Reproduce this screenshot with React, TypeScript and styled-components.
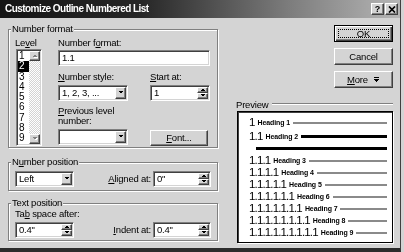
import React from "react";
import styled, { createGlobalStyle, css } from "styled-components";

const FACE = "#d4d4d4";

const Global = createGlobalStyle`
  *, *::before, *::after { box-sizing: border-box; }
  html, body { margin: 0; padding: 0; background: ${FACE}; }
  body {
    width: 404px; height: 252px; overflow: hidden;
    font-family: "Liberation Sans", Arial, sans-serif;
  }
  #root { width: 404px; height: 252px; }
`;

const raised = css`
  background: ${FACE};
  border-style: solid;
  border-width: 1px;
  border-color: #fff #404040 #404040 #fff;
  box-shadow: inset -1px -1px 0 #808080;
`;

const sunken = css`
  background: #fff;
  border-style: solid;
  border-width: 1px;
  border-color: #808080 #fff #fff #808080;
  box-shadow: inset 1px 1px 0 #404040, inset -1px -1px 0 ${FACE};
`;

const Dialog = styled.div`
  width: 401px;
  height: 252px;
  background: ${FACE};
  border-right: 1px solid #404040;
  border-bottom: 4px solid #2c2c2c;
  display: flex;
  flex-direction: column;
  color: #000;
  font-size: 9.5px;
  letter-spacing: -0.2px;
  filter: grayscale(1);
`;

const TitleBar = styled.div`
  flex: none;
  height: 18px;
  display: flex;
  align-items: center;
  padding: 0 2px 0 5px;
  background: linear-gradient(to right, #151515 0%, #262626 35%, #7c7c7c 72%, #b6b6b6 100%);
`;

const TitleText = styled.span`
  color: #fff;
  font-weight: bold;
  font-size: 10px;
  letter-spacing: -0.55px;
  line-height: 12px;
  white-space: nowrap;
`;

const CaptionGroup = styled.div`
  margin-left: auto;
  display: flex;
  gap: 1px;
`;

const CaptionBtn = styled.div`
  ${raised};
  width: 13px;
  height: 12px;
  display: flex;
  align-items: center;
  justify-content: center;
  font-weight: bold;
  font-size: 9px;
  letter-spacing: 0;
  line-height: 10px;
`;

const Body = styled.div`
  flex: 1;
  display: flex;
  padding: 5px 0 0 8px;
`;

const LeftCol = styled.div`
  flex: none;
  width: 210px;
  display: flex;
  flex-direction: column;
`;

const RightCol = styled.div`
  flex: none;
  width: 156px;
  margin-left: 19px;
  padding-top: 2px;
  display: flex;
  flex-direction: column;
`;

const Group = styled.div<{ $mt: number; $pad: string }>`
  position: relative;
  margin-top: ${(p) => p.$mt}px;
  border: 1px solid #808080;
  box-shadow: inset 1px 1px 0 #fff, 1px 1px 0 #fff;
  padding: ${(p) => p.$pad};
`;

const Legend = styled.span`
  position: absolute;
  top: -7px;
  left: 2px;
  padding: 0 1px;
  background: ${FACE};
  line-height: 12px;
  white-space: nowrap;
`;

const Label = styled.span<{ $mt?: number; $lh?: number; $span?: boolean }>`
  display: block;
  white-space: nowrap;
  line-height: ${(p) => p.$lh ?? 12}px;
  margin-top: ${(p) => p.$mt ?? 0}px;
  ${(p) => p.$span && "grid-column: 1 / -1;"}
`;

const FormatRow = styled.div`
  display: flex;
`;

const LevelCol = styled.div`
  width: 26px;
  margin-right: 17px;
  display: flex;
  flex-direction: column;
`;

const ListBox = styled.div`
  ${sunken};
  margin-left: 1px;
  width: 26px;
  height: 97px;
  padding: 1px;
  display: flex;
  overflow: hidden;
`;

const Items = styled.div`
  flex: 1;
  display: flex;
  flex-direction: column;
`;

const Item = styled.div<{ $sel?: boolean }>`
  height: 10.3px;
  line-height: 10.3px;
  font-size: 10px;
  padding-left: 1px;
  background: ${(p) => (p.$sel ? "#000" : "transparent")};
  color: ${(p) => (p.$sel ? "#fff" : "#000")};
`;

const ScrollBar = styled.div`
  width: 11px;
  display: flex;
  flex-direction: column;
  background-color: #fff;
  background-image: conic-gradient(${FACE} 25%, #fff 0 50%, ${FACE} 0 75%, #fff 0);
  background-size: 2px 2px;
`;

const ScrollArrow = styled.div`
  ${raised};
  height: 10px;
  display: flex;
  align-items: center;
  justify-content: center;
`;

const Track = styled.div`
  flex: 1;
`;

const FieldsGrid = styled.div`
  display: grid;
  grid-template-columns: 70px 60px;
  column-gap: 22px;
  align-items: start;
`;

const Field = styled.div<{ $w: number; $mt?: number; $span?: boolean; $h?: number }>`
  ${sunken};
  width: ${(p) => p.$w}px;
  height: ${(p) => p.$h ?? 16}px;
  margin-top: ${(p) => p.$mt ?? 0}px;
  padding: 1px 1px 1px 3px;
  display: flex;
  align-items: center;
  ${(p) => p.$span && "grid-column: 1 / -1;"}
`;

const FieldText = styled.span`
  flex: 1;
  line-height: 12px;
  white-space: nowrap;
`;

const DropBtn = styled.div`
  ${raised};
  width: 11px;
  height: 12px;
  display: flex;
  align-items: center;
  justify-content: center;
`;

const SpinCol = styled.div`
  width: 11px;
  height: 12px;
  display: flex;
  flex-direction: column;
`;

const SpinHalf = styled.div`
  ${raised};
  height: 6px;
  display: flex;
  align-items: center;
  justify-content: center;
`;

const PushButton = styled.div<{ $default?: boolean; $w?: number; $h?: number; $mt?: number }>`
  ${raised};
  position: relative;
  align-self: flex-end;
  width: ${(p) => p.$w ?? 59}px;
  height: ${(p) => p.$h ?? 17}px;
  margin-top: ${(p) => p.$mt ?? 0}px;
  display: flex;
  align-items: center;
  justify-content: center;
  gap: 6px;
  line-height: 12px;
  white-space: nowrap;
  ${(p) =>
    p.$default &&
    css`
      border: 1px solid #000;
      box-shadow: inset 1px 1px 0 #fff, inset -1px -1px 0 #404040, inset -2px -2px 0 #808080;
      &::after {
        content: "";
        position: absolute;
        inset: 3px;
        border: 1px dotted #000;
      }
    `}
`;

const PairRow = styled.div`
  display: flex;
  align-items: center;
  justify-content: space-between;
`;

const PairGrid = styled.div`
  display: grid;
  grid-template-columns: 1fr auto;
  align-items: center;
`;

const Pair = styled.div<{ $mt?: number }>`
  display: flex;
  align-items: center;
  gap: 2px;
  margin-top: ${(p) => p.$mt ?? 0}px;
`;

const PreviewHead = styled.div`
  margin-top: 10px;
  height: 12px;
  display: flex;
  align-items: center;
  margin-left: -1px;
`;

const Etched = styled.div`
  flex: 1;
  height: 2px;
  margin-left: 4px;
  border-top: 1px solid #808080;
  border-bottom: 1px solid #fff;
`;

const PreviewBox = styled.div`
  margin-top: 1px;
  height: 132px;
  background: #fff;
  border: 1px solid #000;
  box-shadow: inset 1px 1px 0 #404040, 1px 1px 0 #fff;
  padding: 4px 5px 0 11px;
  display: flex;
  flex-direction: column;
`;

const PRow = styled.div<{ $mt?: number }>`
  height: 12px;
  margin-top: ${(p) => p.$mt ?? 0}px;
  display: flex;
  align-items: center;
`;

const PNum = styled.span`
  font-size: 11.5px;
  letter-spacing: -0.85px;
  line-height: 12px;
  white-space: nowrap;
`;

const PHead = styled.span`
  font-size: 7px;
  font-weight: bold;
  letter-spacing: -0.1px;
  line-height: 8px;
  margin-left: 3px;
  padding-top: 2px;
  white-space: nowrap;
`;

const PBar = styled.div<{ $dark?: boolean; $indent?: number }>`
  flex: 1;
  height: ${(p) => (p.$dark ? 3 : 2)}px;
  margin-left: ${(p) => p.$indent ?? 3}px;
  margin-top: 1px;
  background: ${(p) => (p.$dark ? "#000" : "#8a8a8a")};
`;

type Dir = "up" | "down";

const Tri = ({ dir, disabled }: { dir: Dir; disabled?: boolean }) => {
  const pts = dir === "up" ? "0,3 5,3 2.5,0.5" : "0,0 5,0 2.5,2.5";
  return (
    <svg width="6" height="4" viewBox="0 0 6 4" shapeRendering="crispEdges">
      {disabled && <polygon points={pts} fill="#fff" transform="translate(1,1)" />}
      <polygon points={pts} fill={disabled ? "#808080" : "#000"} />
    </svg>
  );
};

const Select = ({ w, value, mt }: { w: number; value?: string; mt?: number }) => (
  <Field $w={w} $mt={mt}>
    <FieldText>{value}</FieldText>
    <DropBtn>
      <Tri dir="down" />
    </DropBtn>
  </Field>
);

const Spin = ({ w, value, mt }: { w: number; value: string; mt?: number }) => (
  <Field $w={w} $mt={mt}>
    <FieldText>{value}</FieldText>
    <SpinCol>
      <SpinHalf>
        <Tri dir="up" />
      </SpinHalf>
      <SpinHalf>
        <Tri dir="down" />
      </SpinHalf>
    </SpinCol>
  </Field>
);

const levels = [1, 2, 3, 4, 5, 6, 7, 8, 9];

export default function App() {
  const deep = [3, 4, 5, 6, 7, 8, 9];
  return (
    <>
      <Global />
      <Dialog>
        <TitleBar>
          <TitleText>Customize Outline Numbered List</TitleText>
          <CaptionGroup>
            <CaptionBtn>?</CaptionBtn>
            <CaptionBtn>
              <svg width="8" height="7" viewBox="0 0 8 7">
                <path d="M1 0.5 L7 6.5 M7 0.5 L1 6.5" stroke="#000" strokeWidth="1.7" />
              </svg>
            </CaptionBtn>
          </CaptionGroup>
        </TitleBar>
        <Body>
          <LeftCol>
            <Group $mt={6} $pad="7px 6px 1px 6px">
              <Legend>Number format</Legend>
              <FormatRow>
                <LevelCol>
                  <Label>
                    Le<u>v</u>el
                  </Label>
                  <ListBox>
                    <Items>
                      {levels.map((n) => (
                        <Item key={n} $sel={n === 2}>
                          {n}
                        </Item>
                      ))}
                    </Items>
                    <ScrollBar>
                      <ScrollArrow>
                        <Tri dir="up" disabled />
                      </ScrollArrow>
                      <Track />
                      <ScrollArrow>
                        <Tri dir="down" disabled />
                      </ScrollArrow>
                    </ScrollBar>
                  </ListBox>
                </LevelCol>
                <FieldsGrid>
                  <Label $span>
                    Number f<u>o</u>rmat:
                  </Label>
                  <Field $w={152} $span>
                    <FieldText>1.1</FieldText>
                  </Field>
                  <Label $mt={5}>
                    <u>N</u>umber style:
                  </Label>
                  <Label $mt={5}>
                    <u>S</u>tart at:
                  </Label>
                  <Select w={70} value="1, 2, 3, ..." mt={1} />
                  <Spin w={60} value="1" mt={1} />
                  <Label $mt={5} $lh={10} $span>
                    <u>P</u>revious level
                    <br />
                    number:
                  </Label>
                  <Select w={70} mt={2} />
                  <PushButton $w={58} $h={16} $mt={3}>
                    <span>
                      <u>F</u>ont...
                    </span>
                  </PushButton>
                </FieldsGrid>
              </FormatRow>
            </Group>

            <Group $mt={14} $pad="8px 6px 3px 6px">
              <Legend>
                N<u>u</u>mber position
              </Legend>
              <PairRow>
                <Select w={59} value="Left" />
                <Pair>
                  <Label>
                    <u>A</u>ligned at:
                  </Label>
                  <Spin w={58} value={'0"'} />
                </Pair>
              </PairRow>
            </Group>

            <Group $mt={12} $pad="4px 6px 2px 6px">
              <Legend>Text position</Legend>
              <PairGrid>
                <Label $span>
                  Ta<u>b</u> space after:
                </Label>
                <Spin w={59} value={'0.4"'} mt={2} />
                <Pair $mt={2}>
                  <Label>
                    <u>I</u>ndent at:
                  </Label>
                  <Spin w={58} value={'0.4"'} />
                </Pair>
              </PairGrid>
            </Group>
          </LeftCol>

          <RightCol>
            <PushButton $default>OK</PushButton>
            <PushButton $mt={6}>Cancel</PushButton>
            <PushButton $mt={6}>
              <span>
                <u>M</u>ore
              </span>
              <svg width="6" height="6" viewBox="0 0 6 6" shapeRendering="crispEdges">
                <rect x="0" y="0" width="5" height="1" fill="#000" />
                <polygon points="0,2 5,2 2.5,5" fill="#000" />
              </svg>
            </PushButton>

            <PreviewHead>
              <span>Preview</span>
              <Etched />
            </PreviewHead>
            <PreviewBox>
              <PRow>
                <PNum>1</PNum>
                <PHead>Heading 1</PHead>
                <PBar />
              </PRow>
              <PRow $mt={2}>
                <PNum>1.1</PNum>
                <PHead>Heading 2</PHead>
                <PBar $dark />
              </PRow>
              <PRow>
                <PBar $dark $indent={7} />
              </PRow>
              {deep.map((n) => (
                <PRow key={n}>
                  <PNum>{Array(n).fill("1").join(".")}</PNum>
                  <PHead>Heading {n}</PHead>
                  <PBar />
                </PRow>
              ))}
            </PreviewBox>
          </RightCol>
        </Body>
      </Dialog>
    </>
  );
}
